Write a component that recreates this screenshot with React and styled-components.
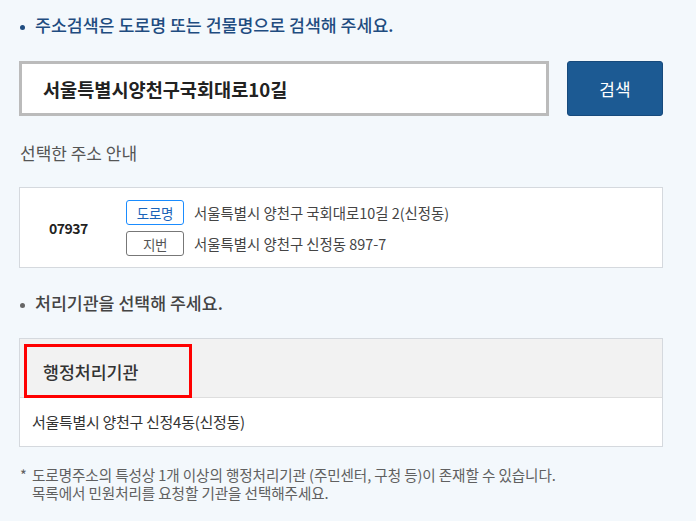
import React, { useState } from "react"
import styled, { createGlobalStyle } from "styled-components"

const GlobalStyle = createGlobalStyle`
  html, body {
    margin: 0;
    padding: 0;
    background: #f3f8fc;
  }
  body {
    font-family: "Noto Sans CJK KR", "Noto Sans", sans-serif;
    color: #333;
  }
`

const Page = styled.div`
  width: 644px;
  padding: 13px 0 20px 19px;
`

const Guide = styled.p`
  position: relative;
  margin: ${p => p.$top || 0}px 0 0;
  padding-left: 16px;
  font-size: 17.3px;
  font-weight: 500;
  line-height: 24px;
  color: ${p => (p.$blue ? "#1f4c80" : "#444")};

  &::before {
    content: "";
    position: absolute;
    left: 1px;
    top: 12px;
    width: 5px;
    height: 5px;
    border-radius: 50%;
    background: ${p => (p.$blue ? "#1f4c80" : "#666")};
  }
`

const SearchRow = styled.div`
  display: flex;
  gap: 18px;
  margin-top: 24px;
  height: 55px;
`

const SearchInput = styled.input`
  flex: 0 0 530px;
  box-sizing: border-box;
  height: 55px;
  border: 3px solid #bbbbbb;
  background: #fff;
  padding: 0 0 0 21px;
  font-family: inherit;
  font-size: 18.6px;
  font-weight: 700;
  color: #222;
  outline: none;
`

const SearchButton = styled.button`
  flex: 0 0 96px;
  height: 55px;
  border: 1px solid #174a7c;
  border-radius: 3px;
  background: #1c5a93;
  color: #fff;
  font-family: inherit;
  font-size: 17px;
  cursor: pointer;
`

const SubTitle = styled.h3`
  margin: 25px 0 0 1px;
  font-size: 17px;
  line-height: 24px;
  font-weight: 400;
  color: #555;
`

const AddressBox = styled.div`
  margin-top: 22px;
  box-sizing: border-box;
  height: 81px;
  border: 1px solid #d5d9de;
  background: #fff;
  padding: 12px 0 11px 29px;
  display: flex;
  align-items: center;
`

const Postal = styled.strong`
  flex: 0 0 77px;
  font-size: 14px;
  letter-spacing: -0.5px;
  color: #222;
`

const AddressLines = styled.div`
  display: flex;
  flex-direction: column;
  gap: 6px;
`

const AddressLine = styled.div`
  display: flex;
  align-items: center;
  gap: 10px;
  font-size: 14.4px;
  color: #444;
`

const Tag = styled.span`
  box-sizing: border-box;
  width: 58px;
  height: 25px;
  display: flex;
  align-items: center;
  justify-content: center;
  border: 1px solid ${p => (p.$road ? "#1a8cff" : "#777")};
  border-radius: 3px;
  font-size: 13.5px;
  letter-spacing: -0.3px;
  color: ${p => (p.$road ? "#1a63b8" : "#555")};
  background: #fff;
`

const Table = styled.div`
  margin-top: 23px;
  border: 1px solid #d5d9de;
  background: #fff;
`

const HeadRow = styled.div`
  box-sizing: border-box;
  height: 59px;
  padding: 5px 0 0 4px;
  background: #f2f2f2;
  border-bottom: 1px solid #dedede;
`

const HeadCell = styled.div`
  box-sizing: border-box;
  width: 168px;
  height: 54px;
  border: 3px solid #ff0000;
  padding-left: 16px;
  display: flex;
  align-items: center;
  font-size: 17.3px;
  font-weight: 500;
  color: #333;
`

const BodyRow = styled.button`
  display: flex;
  align-items: center;
  width: 100%;
  height: 48px;
  padding: 0 0 2px 12px;
  border: 0;
  background: ${p => (p.$picked ? "#f7fbff" : "#fff")};
  font-family: inherit;
  font-size: 15px;
  letter-spacing: -0.3px;
  color: #333;
  text-align: left;
  cursor: pointer;
`

const Note = styled.div`
  margin: 19px 0 0 1px;
  padding-left: 12px;
  font-size: 14.6px;
  letter-spacing: -0.1px;
  color: #606060;
`

const NoteLine = styled.p`
  margin: 0;
  height: 18px;
  line-height: 18px;
`

const Star = styled.span`
  display: inline-block;
  width: 12px;
  margin-left: -12px;
`

const offices = ["서울특별시 양천구 신정4동(신정동)"]

const App = () => {
  const [query, setQuery] = useState("서울특별시양천구국회대로10길")
  const [picked, setPicked] = useState(-1)

  return (
    <Page>
      <GlobalStyle />
      <Guide $blue>주소검색은 도로명 또는 건물명으로 검색해 주세요.</Guide>

      <SearchRow>
        <SearchInput value={query} onChange={e => setQuery(e.target.value)} />
        <SearchButton type="button">검색</SearchButton>
      </SearchRow>

      <SubTitle>선택한 주소 안내</SubTitle>

      <AddressBox>
        <Postal>07937</Postal>
        <AddressLines>
          <AddressLine>
            <Tag $road>도로명</Tag>
            서울특별시 양천구 국회대로10길 2(신정동)
          </AddressLine>
          <AddressLine>
            <Tag>지번</Tag>
            서울특별시 양천구 신정동 897-7
          </AddressLine>
        </AddressLines>
      </AddressBox>

      <Guide $top={23}>처리기관을 선택해 주세요.</Guide>

      <Table>
        <HeadRow>
          <HeadCell>행정처리기관</HeadCell>
        </HeadRow>
        {offices.map((name, i) => (
          <BodyRow key={name} $picked={picked === i} onClick={() => setPicked(i)}>
            {name}
          </BodyRow>
        ))}
      </Table>

      <Note>
        <NoteLine>
          <Star>*</Star>도로명주소의 특성상 1개 이상의 행정처리기관 (주민센터, 구청 등)이 존재할 수 있습니다.
        </NoteLine>
        <NoteLine>목록에서 민원처리를 요청할 기관을 선택해주세요.</NoteLine>
      </Note>
    </Page>
  )
}

export default App
